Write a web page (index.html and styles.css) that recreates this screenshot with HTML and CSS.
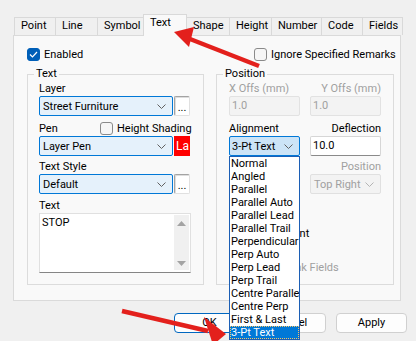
FILE: index.html
```html
<!DOCTYPE html>
<html lang="en">
<head>
    <meta charset="UTF-8">
    <meta name="viewport" content="width=device-width, initial-scale=1.0">
    <title>Text Properties</title>
    <link rel="stylesheet" href="styles.css">
</head>
<body>
    <div class="dialog">
        <div class="tabs">
            <div class="tab">Point</div>
            <div class="tab">Line</div>
            <div class="tab">Symbol</div>
            <div class="tab active">Text</div>
            <div class="tab">Shape</div>
            <div class="tab">Height</div>
            <div class="tab">Number</div>
            <div class="tab">Code</div>
            <div class="tab">Fields</div>
        </div>

        <div class="panel">
            <div class="top-row">
                <label class="check">
                    <span class="box checked">
                        <svg width="9" height="7" viewBox="0 0 9 7"><polyline points="1,3.5 3.5,6 8,1" fill="none" stroke="#fff" stroke-width="1.2"/></svg>
                    </span>
                    Enabled
                </label>
                <label class="check ignore"><span class="box"></span>Ignore Specified Remarks</label>
            </div>

            <div class="groups">
                <div class="group group-text">
                    <div class="legend">Text</div>
                    <div class="label">Layer</div>
                    <div class="combo-row">
                        <div class="combo focus">
                            <span>Street Furniture</span>
                            <svg width="9" height="5" viewBox="0 0 9 5"><polyline points="0.5,0.5 4.5,4.5 8.5,0.5" fill="none" stroke="#606060"/></svg>
                        </div>
                        <div class="more">...</div>
                    </div>
                    <div class="pen-row">
                        <span class="label">Pen</span>
                        <label class="check"><span class="box"></span>Height Shading</label>
                    </div>
                    <div class="combo-row">
                        <div class="combo focus">
                            <span>Layer Pen</span>
                            <svg width="9" height="5" viewBox="0 0 9 5"><polyline points="0.5,0.5 4.5,4.5 8.5,0.5" fill="none" stroke="#606060"/></svg>
                        </div>
                        <div class="swatch">La</div>
                    </div>
                    <div class="label spaced">Text Style</div>
                    <div class="combo-row">
                        <div class="combo focus">
                            <span>Default</span>
                            <svg width="9" height="5" viewBox="0 0 9 5"><polyline points="0.5,0.5 4.5,4.5 8.5,0.5" fill="none" stroke="#606060"/></svg>
                        </div>
                        <div class="more">...</div>
                    </div>
                    <div class="label spaced-more">Text</div>
                    <div class="textarea">
                        <div class="text-content">STOP</div>
                        <div class="scroll">
                            <svg width="9" height="5" viewBox="0 0 9 5"><polygon points="0,5 4.5,0 9,5" fill="#a3a3a3"/></svg>
                            <svg width="9" height="5" viewBox="0 0 9 5"><polygon points="0,0 9,0 4.5,5" fill="#a3a3a3"/></svg>
                        </div>
                    </div>
                </div>

                <div class="group group-pos">
                    <div class="legend">Position</div>
                    <div class="pair">
                        <div class="label muted">X Offs (mm)</div>
                        <div class="label muted right">Y Offs (mm)</div>
                        <div class="input disabled">1.0</div>
                        <div class="input disabled">1.0</div>
                    </div>
                    <div class="pair">
                        <div class="label row-label">Alignment</div>
                        <div class="label row-label right">Deflection</div>
                        <div class="combo open">
                            <span>3-Pt Text</span>
                            <svg width="9" height="5" viewBox="0 0 9 5"><polyline points="0.5,0.5 4.5,4.5 8.5,0.5" fill="none" stroke="#606060"/></svg>
                            <div class="list">
                                <div class="item">Normal</div>
                                <div class="item">Angled</div>
                                <div class="item">Parallel</div>
                                <div class="item">Parallel Auto</div>
                                <div class="item">Parallel Lead</div>
                                <div class="item">Parallel Trail</div>
                                <div class="item">Perpendicular</div>
                                <div class="item">Perp Auto</div>
                                <div class="item">Perp Lead</div>
                                <div class="item">Perp Trail</div>
                                <div class="item">Centre Parallel</div>
                                <div class="item">Centre Perp</div>
                                <div class="item">First &amp; Last</div>
                                <div class="item selected">3-Pt Text</div>
                            </div>
                        </div>
                        <div class="input">10.0</div>
                    </div>
                    <div class="pair spaced">
                        <div></div>
                        <div class="label muted right">Position</div>
                        <div></div>
                        <div class="combo disabled">
                            <span>Top Right</span>
                            <svg width="9" height="5" viewBox="0 0 9 5"><polyline points="0.5,0.5 4.5,4.5 8.5,0.5" fill="none" stroke="#b4b4b4"/></svg>
                        </div>
                    </div>
                    <label class="check option"><span class="box"></span>Smart Indent</label>
                    <label class="check option option-last muted"><span class="box"></span>Ignore Blank Fields</label>
                </div>
            </div>
        </div>

        <div class="buttons">
            <div class="button default">OK</div>
            <div class="button">Cancel</div>
            <div class="button">Apply</div>
        </div>
    </div>

    <svg class="arrows" width="416" height="341" viewBox="0 0 416 341">
        <line x1="259" y1="66" x2="190" y2="39" stroke="#e3201c" stroke-width="4.5"/>
        <polygon points="174,32 194,27 189,47" fill="#e3201c"/>
        <line x1="122" y1="311" x2="208" y2="331" stroke="#e3201c" stroke-width="4.5"/>
        <polygon points="226,334 204,317 213,345" fill="#e3201c"/>
    </svg>
</body>
</html>
```

FILE: styles.css
```css
body {
    margin: 0;
    width: 416px;
    height: 341px;
    overflow: hidden;
    position: relative;
    background-color: #f0f0f0;
    font-family: Roboto, "Liberation Sans", sans-serif;
    font-size: 11px;
    color: #000;
}
.dialog {
    padding: 14px 0 0 13px;
}
.tabs {
    display: grid;
    grid-template-columns: 41px 42px 46px 43px 43px 42px 50px 41px 40px;
    align-items: end;
    height: 21px;
    margin-left: 1px;
    position: relative;
    z-index: 1;
}
.tab {
    height: 18px;
    box-sizing: border-box;
    margin-right: -1px;
    padding: 0 0 0 6px;
    border: 1px solid #d9d9d9;
    border-bottom: none;
    background-color: #f0f0f0;
    line-height: 15px;
    white-space: nowrap;
    overflow: hidden;
}
.tab.active {
    height: 22px;
    margin-bottom: -1px;
    background-color: #f9f9f9;
    position: relative;
}
.panel {
    width: 388px;
    height: 266px;
    box-sizing: border-box;
    padding: 12px 6px 0 13px;
    border: 1px solid #dadada;
    background-color: #f9f9f9;
}
.top-row, .groups {
    display: grid;
    grid-template-columns: 177px 178px;
    column-gap: 12px;
}
.top-row {
    height: 13px;
}
.check {
    display: flex;
    align-items: center;
    gap: 4px;
    line-height: 15px;
    white-space: nowrap;
}
.top-row .check {
    line-height: 13px;
}
.ignore {
    padding-left: 38px;
}
.box {
    width: 13px;
    height: 13px;
    box-sizing: border-box;
    border: 1px solid #8a8a8a;
    border-radius: 3px;
    background-color: #f6f6f6;
    display: flex;
    align-items: center;
    justify-content: center;
    flex: none;
}
.box.checked {
    border-color: #005fb8;
    background-color: #005fb8;
}
.groups {
    margin-top: 13px;
}
.group {
    box-sizing: border-box;
    border: 1px solid #dcdcdc;
    padding: 0 12px 11px 11px;
}
.group-pos {
    padding: 0 12px;
}
.legend {
    width: max-content;
    margin: -8px 0 0 -5px;
    padding: 0 2px;
    line-height: 14px;
    background-color: #f9f9f9;
}
.group-pos .legend {
    margin-left: -6px;
}
.label {
    line-height: 15px;
    white-space: nowrap;
}
.label.spaced {
    margin-top: 3px;
}
.label.spaced-more {
    margin-top: 4px;
}
.muted {
    color: #a0a0a0;
}
.right {
    justify-self: end;
}
.combo-row {
    display: flex;
    gap: 1px;
}
.combo {
    height: 20px;
    box-sizing: border-box;
    border: 1px solid #e0e0e0;
    border-radius: 2px;
    padding: 0 6px 0 3px;
    display: flex;
    align-items: center;
    justify-content: space-between;
    white-space: nowrap;
    position: relative;
}
.combo-row .combo {
    width: 134px;
}
.combo.focus {
    border-color: #0078d7;
    background-color: #e5f1fb;
}
.combo.open {
    border-color: #0078d7;
    background-color: #cce4f7;
    padding-left: 2px;
}
.combo.disabled {
    background-color: #f3f3f3;
    color: #a0a0a0;
}
.more {
    width: 16px;
    height: 20px;
    box-sizing: border-box;
    border: 1px solid #a3a3a3;
    border-right-color: #e0e0e0;
    border-bottom-color: #e0e0e0;
    border-radius: 2px;
    background-color: #fff;
    box-shadow: inset 1px 1px 0 #dedede;
    text-align: center;
    line-height: 12px;
    padding-top: 5px;
}
.swatch {
    width: 16px;
    height: 20px;
    background-color: #ff0000;
    color: #fff;
    font-size: 12px;
    line-height: 20px;
    padding-left: 2px;
    box-sizing: border-box;
    overflow: hidden;
}
.pen-row {
    display: grid;
    grid-template-columns: 61px 1fr;
    align-items: end;
    height: 20px;
}
.pen-row .check {
    margin-bottom: 0;
}
.textarea {
    height: 60px;
    box-sizing: border-box;
    border: 1px solid #e0e0e0;
    border-bottom-color: #858585;
    background-color: #fff;
    display: flex;
}
.text-content {
    flex: 1;
    padding: 1px 2px;
    line-height: 15px;
}
.scroll {
    width: 15px;
    margin: 1px 1px 2px 0;
    padding: 6px 0 4px;
    background-color: #f0f0f0;
    display: flex;
    flex-direction: column;
    justify-content: space-between;
    align-items: center;
}
.pair {
    display: grid;
    grid-template-columns: 71px 71px;
    column-gap: 10px;
}
.pair.spaced {
    margin-top: 3px;
}
.row-label {
    align-self: end;
    margin-top: 5px;
}
.input {
    height: 20px;
    box-sizing: border-box;
    border: 1px solid #d6d6d6;
    border-bottom-color: #8a8a8a;
    border-radius: 2px;
    background-color: #fff;
    padding: 0 2px;
    line-height: 18px;
}
.input.disabled {
    border-color: #e2e2e2;
    background-color: #f3f3f3;
    color: #a0a0a0;
}
.option {
    margin-top: 32px;
}
.option-last {
    margin-top: 19px;
}
.option.muted .box {
    border-color: #c6c6c6;
}
.list {
    position: absolute;
    top: 19px;
    left: -1px;
    width: 71px;
    box-sizing: border-box;
    border: 1px solid #1c5fb5;
    background-color: #fff;
    color: #000;
    z-index: 2;
}
.item {
    line-height: 13px;
    padding-left: 1px;
    white-space: nowrap;
    overflow: hidden;
}
.item.selected {
    background-color: #0078d7;
    color: #fff;
    outline: 1px dotted #f2c46a;
    outline-offset: -1px;
}
.buttons {
    display: flex;
    justify-content: flex-end;
    gap: 10px;
    margin-top: 12px;
    padding-right: 9px;
}
.button {
    width: 71px;
    height: 20px;
    box-sizing: border-box;
    border: 1px solid #d0d0d0;
    border-radius: 4px;
    background-color: #fdfdfd;
    text-align: center;
    line-height: 18px;
}
.button.default {
    border-color: #0067c0;
}
.arrows {
    position: absolute;
    top: 0;
    left: 0;
    pointer-events: none;
    z-index: 5;
}
```
